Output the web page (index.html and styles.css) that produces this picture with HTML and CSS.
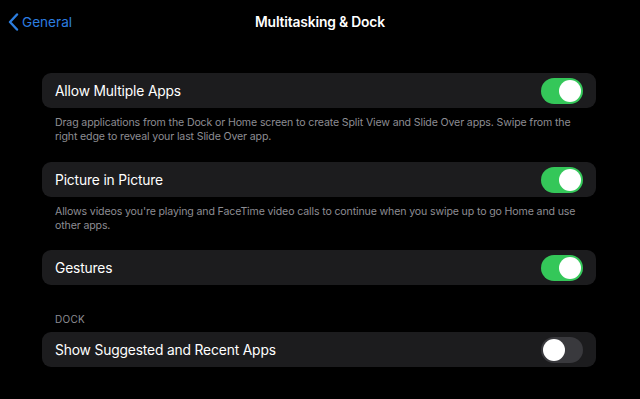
FILE: index.html
```html
<!DOCTYPE html>
<html>
<head>
<meta charset="utf-8">
<link rel="stylesheet" href="styles.css">
</head>
<body>
<div class="screen">
  <header class="nav">
    <a class="back">
      <svg class="chev" width="11" height="18" viewBox="0 0 11 18"><path d="M9 1.5 L2 9 L9 16.5" fill="none" stroke="#2c7ee0" stroke-width="2.4" stroke-linecap="round" stroke-linejoin="round"/></svg>
      <span>General</span>
    </a>
    <div class="title">Multitasking &amp; Dock</div>
  </header>
  <main class="content">
    <section class="group g1">
      <div class="row"><span class="label">Allow Multiple Apps</span><span class="toggle on"><span class="knob"></span></span></div>
      <p class="foot">Drag applications from the Dock or Home screen to create Split View and Slide Over apps. Swipe from the right edge to reveal your last Slide Over app.</p>
    </section>
    <section class="group g2">
      <div class="row"><span class="label">Picture in Picture</span><span class="toggle on"><span class="knob"></span></span></div>
      <p class="foot">Allows videos you're playing and FaceTime video calls to continue when you swipe up to go Home and use other apps.</p>
    </section>
    <section class="group g3">
      <div class="row"><span class="label">Gestures</span><span class="toggle on"><span class="knob"></span></span></div>
    </section>
    <section class="group g4">
      <div class="head">DOCK</div>
      <div class="row"><span class="label">Show Suggested and Recent Apps</span><span class="toggle"><span class="knob"></span></span></div>
    </section>
  </main>
</div>
</body>
</html>
```
FILE: styles.css
```css
html, body { margin: 0; padding: 0; background: #000; }
body { font-family: Inter, "Liberation Sans", sans-serif; color: #fff; }
.screen { width: 640px; height: 399px; overflow: hidden; position: relative; }
.nav { height: 44px; display: flex; align-items: center; justify-content: center; position: relative; }
.back { position: absolute; left: 8px; top: 13px; display: flex; align-items: center; gap: 3px; color: #2c7ee0; font-size: 13.6px; }
.title { font-size: 13.8px; font-weight: 600; letter-spacing: -0.15px; }
.content { padding: 29px 44px 0 42px; }
.group { display: flex; flex-direction: column; }
.row { height: 35px; background: #1c1c1e; border-radius: 9px; display: flex; align-items: center; justify-content: space-between; padding: 0 13px; }
.label { font-size: 13.8px; letter-spacing: -0.15px; }
.toggle { width: 42px; height: 26px; border-radius: 13px; background: #39393d; position: relative; }
.toggle.on { background: #34c759; }
.knob { position: absolute; top: 2px; left: 2px; width: 22px; height: 22px; border-radius: 50%; background: #fff; }
.toggle.on .knob { left: 18px; }
.foot { margin: 8px 0 0; padding: 0 12px 0 13px; font-size: 10.6px; line-height: 14px; color: #8d8d93; letter-spacing: -0.14px; }
.g2 { margin-top: 18px; }
.g3 { margin-top: 17px; }
.g4 { margin-top: 28px; }
.head { font-size: 10px; color: #8d8d93; padding: 0 13px; margin-bottom: 7px; letter-spacing: 0.3px; }
```
